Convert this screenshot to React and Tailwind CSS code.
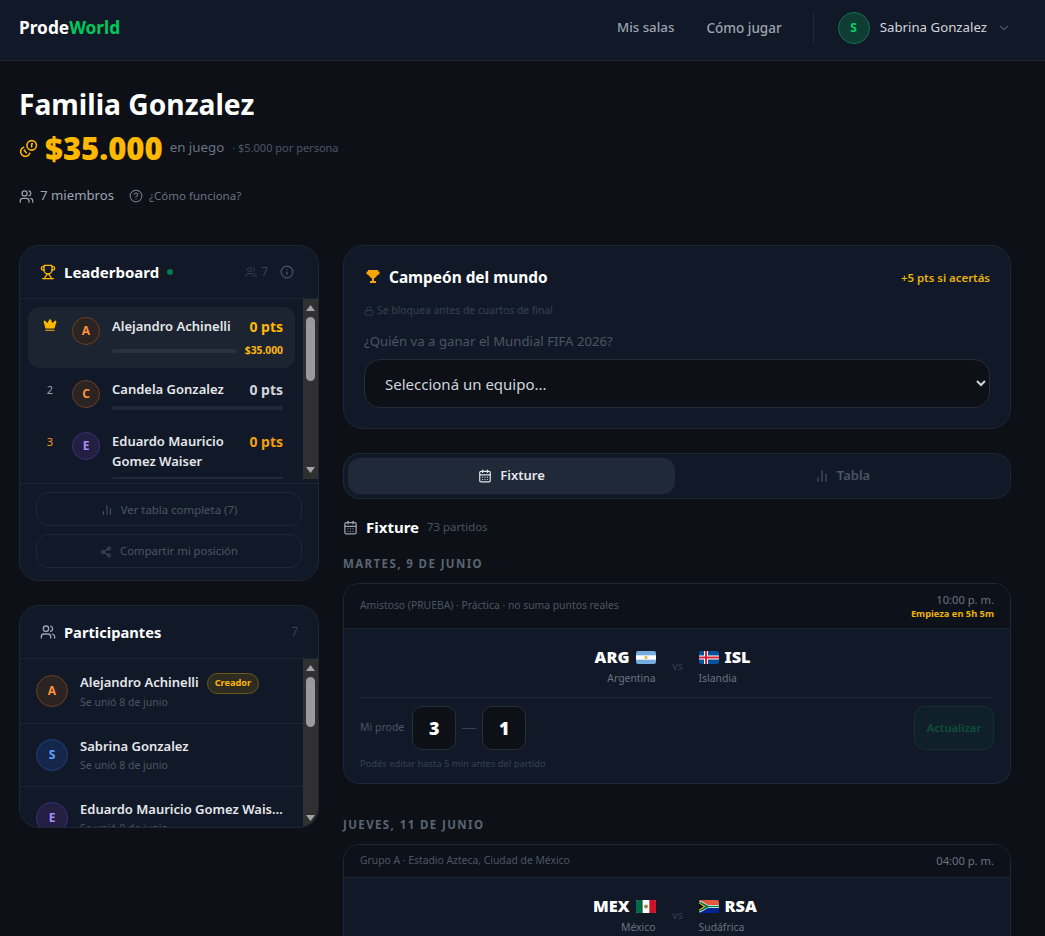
import React from "react";
import { Trophy, Crown, Users, Info, ChartNoAxesColumn, Share2, CircleHelp, Coins, Lock, CalendarDays, ChevronDown } from "lucide-react";

const ARG = () => (
  <svg width="20" height="13" viewBox="0 0 20 13" className="rounded-[2px] shrink-0">
    <rect width="20" height="13" fill="#74acdf" />
    <rect y="4.33" width="20" height="4.34" fill="#fff" />
    <rect x="8.7" y="5.2" width="2.6" height="2.6" fill="#e2a93b" />
  </svg>
);
const ISL = () => (
  <svg width="20" height="13" viewBox="0 0 20 13" className="rounded-[2px] shrink-0">
    <rect width="20" height="13" fill="#02529c" />
    <rect x="5" width="4" height="13" fill="#fff" />
    <rect y="4.5" width="20" height="4" fill="#fff" />
    <rect x="6" width="2" height="13" fill="#dc1e35" />
    <rect y="5.5" width="20" height="2" fill="#dc1e35" />
  </svg>
);
const MEX = () => (
  <svg width="20" height="13" viewBox="0 0 20 13" className="rounded-[2px] shrink-0">
    <rect width="20" height="13" fill="#fff" />
    <rect width="6.67" height="13" fill="#006847" />
    <rect x="13.33" width="6.67" height="13" fill="#ce1126" />
    <circle cx="10" cy="6.5" r="2" fill="#a8843f" />
  </svg>
);
const RSA = () => (
  <svg width="20" height="13" viewBox="0 0 20 13" className="rounded-[2px] shrink-0">
    <rect width="20" height="6.5" fill="#e5573f" />
    <rect y="6.5" width="20" height="6.5" fill="#002395" />
    <path d="M0 0 L9 5 H20 V8 H9 L0 13 Z" fill="#fff" />
    <path d="M0 1 L9.5 5.7 H20 V7.3 H9.5 L0 12 Z" fill="#007a4d" />
    <path d="M0 2.4 L6.5 6.5 L0 10.6 Z" fill="#ffb612" />
    <path d="M0 3.6 L4.6 6.5 L0 9.4 Z" fill="#000" />
  </svg>
);

const tones = {
  orange: "bg-[#2b2422] border-[#6b3f24] text-[#fb923c]",
  purple: "bg-[#221f42] border-[#3d2f78] text-[#a78bfa]",
  blue: "bg-[#14264a] border-[#1f3f7a] text-[#60a5fa]",
  green: "bg-[#0f3d33] border-[#14704c] text-[#00d563]",
};

function Avatar({ letter, tone, size }) {
  return (
    <div className={`${size} ${tones[tone]} shrink-0 rounded-full border flex items-center justify-center font-bold text-xs`}>
      {letter}
    </div>
  );
}

function Scrollbar({ thumb }) {
  return (
    <div className="w-[15px] shrink-0 bg-[#303030] flex flex-col items-center">
      <div className="h-[18px] w-full shrink-0 flex items-center justify-center">
        <svg width="9" height="6" viewBox="0 0 9 6"><path d="M4.500 0 L9 6 H0 Z" fill="#a3a3a3" /></svg>
      </div>
      <div className={`w-[9px] rounded-full bg-[#9a9a9a] shrink-0 ${thumb}`} />
      <div className="mt-auto h-[18px] w-full shrink-0 flex items-center justify-center">
        <svg width="9" height="6" viewBox="0 0 9 6"><path d="M4.500 6 L9 0 H0 Z" fill="#a3a3a3" /></svg>
      </div>
    </div>
  );
}

function RankRow({ rank, name, tone, ptsClass, rankClass }) {
  return (
    <div className="shrink-0 flex gap-3 px-3 py-2.5">
      <div className={`w-5 h-5 shrink-0 flex items-center justify-center text-[11px] ${rankClass}`}>{rank}</div>
      <Avatar letter={name[0]} tone={tone} size="w-7 h-7" />
      <div className="flex-1 min-w-0">
        <div className="flex justify-between gap-2 leading-[19.5px]">
          <span className="text-[13px] font-semibold text-[#e5e7eb]">{name}</span>
          <span className={`text-sm font-bold whitespace-nowrap ${ptsClass}`}>0 pts</span>
        </div>
        <div className="mt-1.5 h-1 rounded-full bg-[#1f2937]" />
      </div>
    </div>
  );
}

function PartRow({ name, tone, className, badge }) {
  return (
    <div className={`flex items-center gap-3 px-4 border-b border-[#1c2534] ${className}`}>
      <Avatar letter={name[0]} tone={tone} size="w-8 h-8" />
      <div className="flex-1 min-w-0">
        <div className="flex items-center gap-2 pt-px">
          <span className="truncate max-w-[204px] text-[13px] font-semibold text-[#e5e7eb]">{name}</span>
          {badge && (
            <span className="shrink-0 rounded-full border border-[#6b5a1c] bg-[#2e2b20] px-[7px] h-[21px] flex items-center text-[9.2px] font-bold text-[#ffb800]">
              Creador
            </span>
          )}
        </div>
        <div className="mt-px text-[10.5px] text-[#4b5563]">Se unió 8 de junio</div>
      </div>
    </div>
  );
}

function Team({ code, name, flag, right }) {
  return (
    <div className={`flex-1 flex flex-col ${right ? "items-end pr-px" : "items-start"}`}>
      <div className="flex items-center gap-[6px] h-[22px]">
        {right ? (
          <>
            <span className="text-[16.3px] font-black text-white">{code}</span>
            {flag}
          </>
        ) : (
          <>
            {flag}
            <span className="text-[16.3px] font-black text-white">{code}</span>
          </>
        )}
      </div>
      <div className="text-[10.4px] leading-4 mt-[2px] text-[#6b7280]">{name}</div>
    </div>
  );
}

function Match({ info, time, starts, a, b, headerClass, children }) {
  return (
    <div className="rounded-2xl border border-[#1e2736] bg-[#111928] overflow-hidden">
      <div className={`flex justify-between items-center px-4 bg-[#0d1119] border-b border-[#1c2534] ${headerClass}`}>
        <span className="text-[10.35px] text-[#4b5563]">{info}</span>
        <div className="text-right">
          <div className="text-[11.2px] leading-4 text-[#6b7280]">{time}</div>
          {starts && <div className="text-[9.3px] leading-3 font-bold text-[#eab308]">{starts}</div>}
        </div>
      </div>
      <div className="px-4 pt-[17px]">
        <div className="flex items-start">
          <Team {...a} right />
          <div className="w-[42px] text-center text-[10.5px] text-[#374151] pt-[13px]">vs</div>
          <Team {...b} />
        </div>
        {children}
      </div>
    </div>
  );
}

const dateClass = "h-4 pt-[2px] flex items-center text-[11.5px] font-bold tracking-[1.4px] text-[#5b6472]";

export default function App() {
  return (
    <div className="h-[936px] overflow-hidden bg-[#0d1017] font-['Noto_Sans',sans-serif] text-white">
      <header className="h-[61px] bg-[#111928] border-b border-[#1e2736] pl-[19px] pr-[34px] pb-[4px] flex items-center justify-between">
        <div className="text-[17.3px] font-bold">
          Prode<span className="text-[#00c95c]">World</span>
        </div>
        <div className="flex items-center">
          <span className="text-[13.3px] font-medium text-[#9ca3af]">Mis salas</span>
          <span className="ml-8 text-[13.5px] font-medium text-[#9ca3af]">Cómo jugar</span>
          <div className="ml-[31px] mr-6 w-px h-8 bg-[#1f2937]" />
          <Avatar letter="S" tone="green" size="w-8 h-8" />
          <span className="ml-[10px] text-[13.25px] text-[#d1d5db]">Sabrina Gonzalez</span>
          <ChevronDown className="ml-[10px] w-3.5 h-3.5 text-[#4b5563]" />
        </div>
      </header>

      <main className="pl-[19px] pr-[34px]">
        <section className="pt-[23px] h-[184px]">
          <h1 className="text-[28.2px] leading-10 font-bold">Familia Gonzalez</h1>
          <div className="flex items-center mt-[4px] h-10">
            <Coins className="w-[19px] h-[19px] -scale-x-100 text-[#ffb800]" />
            <span className="ml-[7px] text-[31px] font-black text-[#ffb800]">$35.000</span>
            <span className="ml-[7px] text-[13.3px] text-[#6b7280]">en juego</span>
            <span className="ml-2 text-[11px] text-[#4b5563]">· $5.000 por persona</span>
          </div>
          <div className="flex items-center mt-[18px] h-5">
            <Users className="w-[15px] h-[15px] text-[#9ca3af]" />
            <span className="ml-[6px] text-[13.2px] text-[#9ca3af]">7 miembros</span>
            <CircleHelp className="ml-[15px] w-3.5 h-3.5 text-[#6b7280]" />
            <span className="ml-[6px] text-[11.5px] text-[#6b7280]">¿Cómo funciona?</span>
          </div>
        </section>

        <div className="flex gap-6 items-start">
          <aside className="w-[300px] shrink-0 flex flex-col gap-6">
            <div className="rounded-[20px] border border-[#1e2736] bg-[#111928] overflow-hidden">
              <div className="h-[53px] pl-5 pr-6 flex items-center border-b border-[#1c2534]">
                <Trophy className="w-4 h-4 text-[#ffb800]" />
                <span className="ml-2 text-[15px] font-bold">Leaderboard</span>
                <span className="ml-2 w-[6px] h-[6px] rounded-full bg-[#0a7a4a]" />
                <Users className="ml-auto w-3 h-3 text-[#374151]" />
                <span className="ml-1 text-xs text-[#374151]">7</span>
                <Info className="ml-3 w-3.5 h-3.5 text-[#4b5563]" />
              </div>
              <div className="h-[180px] flex">
                <div className="flex-1 min-w-0 overflow-hidden p-2 flex flex-col gap-0.5">
                  <div className="shrink-0 flex gap-3 px-3 py-2.5 rounded-xl bg-[#1d2431]">
                    <div className="w-5 h-4 shrink-0 flex items-center justify-center">
                      <Crown className="w-3.5 h-3.5 text-[#ffb800] fill-[#ffb800]" />
                    </div>
                    <Avatar letter="A" tone="orange" size="w-7 h-7" />
                    <div className="flex-1 min-w-0">
                      <div className="flex justify-between gap-2 leading-[19.5px]">
                        <span className="text-[13px] font-semibold text-[#e5e7eb]">Alejandro Achinelli</span>
                        <span className="text-sm font-bold text-[#ffb800]">0 pts</span>
                      </div>
                      <div className="mt-1.5 flex items-center gap-2">
                        <div className="flex-1 h-1 rounded-full bg-[#2a3140]" />
                        <span className="text-[10.3px] leading-[15px] font-bold text-[#ffb800]">$35.000</span>
                      </div>
                    </div>
                  </div>
                  <RankRow rank="2" name="Candela Gonzalez" tone="orange" ptsClass="text-[#d1d5db]" rankClass="text-[#9ca3af]" />
                  <RankRow rank="3" name="Eduardo Mauricio Gomez Waiser" tone="purple" ptsClass="text-[#f59e0b]" rankClass="text-[#f59e0b]" />
                </div>
                <Scrollbar thumb="h-[64px]" />
              </div>
              <div className="mt-1 border-t border-[#1c2534] px-4 pt-2 pb-3 flex flex-col gap-2">
                <div className="h-[34px] pt-px rounded-xl border border-[#1e2736] flex items-center justify-center gap-2 text-[11.4px] text-[#4b5563]">
                  <ChartNoAxesColumn className="w-3 h-3" />
                  Ver tabla completa (7)
                </div>
                <div className="h-[34px] pt-px rounded-xl border border-[#1e2736] flex items-center justify-center gap-2 text-[11.3px] text-[#4b5563]">
                  <Share2 className="w-3 h-3" />
                  Compartir mi posición
                </div>
              </div>
            </div>

            <div className="rounded-[20px] border border-[#1e2736] bg-[#111928] overflow-hidden">
              <div className="h-[53px] pl-5 pr-5 flex items-center border-b border-[#1c2534]">
                <Users className="w-4 h-4 text-[#9ca3af]" />
                <span className="ml-2 text-[14.7px] font-bold">Participantes</span>
                <span className="ml-auto text-xs text-[#374151]">7</span>
              </div>
              <div className="h-[168px] flex">
                <div className="flex-1 min-w-0 overflow-hidden">
                  <PartRow name="Alejandro Achinelli" tone="orange" className="h-[65px]" badge />
                  <PartRow name="Sabrina Gonzalez" tone="blue" className="h-[63px]" />
                  <PartRow name="Eduardo Mauricio Gomez Waiser" tone="purple" className="h-[63px]" />
                </div>
                <Scrollbar thumb="h-[50px]" />
              </div>
            </div>
          </aside>

          <div className="flex-1 min-w-0">
            <div className="h-[184px] rounded-[20px] border border-[#1e2736] bg-[#111928] px-5 pt-5">
              <div className="flex items-center justify-between h-6">
                <div className="flex items-center">
                  <svg width="16" height="16" viewBox="0 0 16 16" className="ml-[1px] -mt-[2px]" fill="#f5a70a">
                    <path d="M3 1h10v1.500h1.500V5L12 6.500C11.500 8 10 9 9 9.300V12h2v2H5v-2h2V9.300C6 9 4.500 8 4 6.500L1.500 5V2.500H3z" />
                  </svg>
                  <span className="ml-2 text-[15.4px] font-bold">Campeón del mundo</span>
                </div>
                <span className="text-[11.4px] font-semibold text-[#eab308]">+5 pts si acertás</span>
              </div>
              <div className="flex items-center mt-[13px] h-4 text-[10.35px] text-[#374151]">
                <Lock className="w-2.5 h-2.5 mr-[3px]" />
                Se bloquea antes de cuartos de final
              </div>
              <div className="mt-3 text-[13.2px] leading-5 text-[#4b5563]">¿Quién va a ganar el Mundial FIFA 2026?</div>
              <select className="mt-2 w-full h-[49px] rounded-2xl border border-[#262c36] bg-[#0d1017] pl-4 pr-1 text-[15px] text-[#d1d5db] [color-scheme:dark]" defaultValue="">
                <option value="">Seleccioná un equipo...</option>
                <option value="ARG">Argentina</option>
              </select>
            </div>

            <div className="mt-6 h-[46px] rounded-2xl border border-[#1e2736] bg-[#111928] p-1 flex gap-1">
              <div className="flex-1 rounded-xl bg-[#1f2937] flex items-center justify-center gap-2 text-[13px] font-semibold text-[#e5e7eb]">
                <CalendarDays className="w-3.5 h-3.5" />
                Fixture
              </div>
              <div className="flex-1 rounded-xl flex items-center justify-center gap-2 text-[13px] font-semibold text-[#4b5563]">
                <ChartNoAxesColumn className="w-3.5 h-3.5" />
                Tabla
              </div>
            </div>

            <div className="mt-4 h-6 flex items-center">
              <CalendarDays className="w-[15px] h-[15px] text-[#9ca3af]" />
              <span className="ml-2 text-[15px] font-bold">Fixture</span>
              <span className="ml-2 text-[11.4px] text-[#4b5563]">73 partidos</span>
            </div>

            <div className={`mt-4 ${dateClass}`}>MARTES, 9 DE JUNIO</div>
            <div className="mt-3">
              <Match
                info="Amistoso (PRUEBA) · Práctica · no suma puntos reales"
                time="10:00 p. m."
                starts="Empieza en 5h 5m"
                headerClass="h-[45px]"
                a={{ code: "ARG", name: "Argentina", flag: <ARG /> }}
                b={{ code: "ISL", name: "Islandia", flag: <ISL /> }}
              >
                <div className="mt-[11px] border-t border-[#1c2534] pt-2 flex items-center">
                  <span className="text-[10.5px] text-[#4b5563]">Mi prode</span>
                  <div className="ml-2 w-11 h-11 rounded-[10px] border border-[#2a2f38] bg-[#0d1017] flex items-center justify-center text-lg font-black">3</div>
                  <div className="mx-[6px] w-[14px] h-px bg-[#374151]" />
                  <div className="w-11 h-11 rounded-[10px] border border-[#2a2f38] bg-[#0d1017] flex items-center justify-center text-lg font-black">1</div>
                  <div className="ml-auto w-20 h-11 rounded-[10px] border border-[#14302e] bg-[#10202b] flex items-center justify-center text-[11.2px] font-semibold text-[#0f4f3a]">Actualizar</div>
                </div>
                <div className="mt-[7px] pb-3 text-[9.35px] leading-[14px] text-[#374151]">Podés editar hasta 5 min antes del partido</div>
              </Match>
            </div>

            <div className={`mt-8 ${dateClass}`}>JUEVES, 11 DE JUNIO</div>
            <div className="mt-3">
              <Match
                info="Grupo A · Estadio Azteca, Ciudad de México"
                time="04:00 p. m."
                headerClass="h-[33px]"
                a={{ code: "MEX", name: "México", flag: <MEX /> }}
                b={{ code: "RSA", name: "Sudáfrica", flag: <RSA /> }}
              >
                <div className="h-24" />
              </Match>
            </div>
          </div>
        </div>
      </main>
    </div>
  );
}
